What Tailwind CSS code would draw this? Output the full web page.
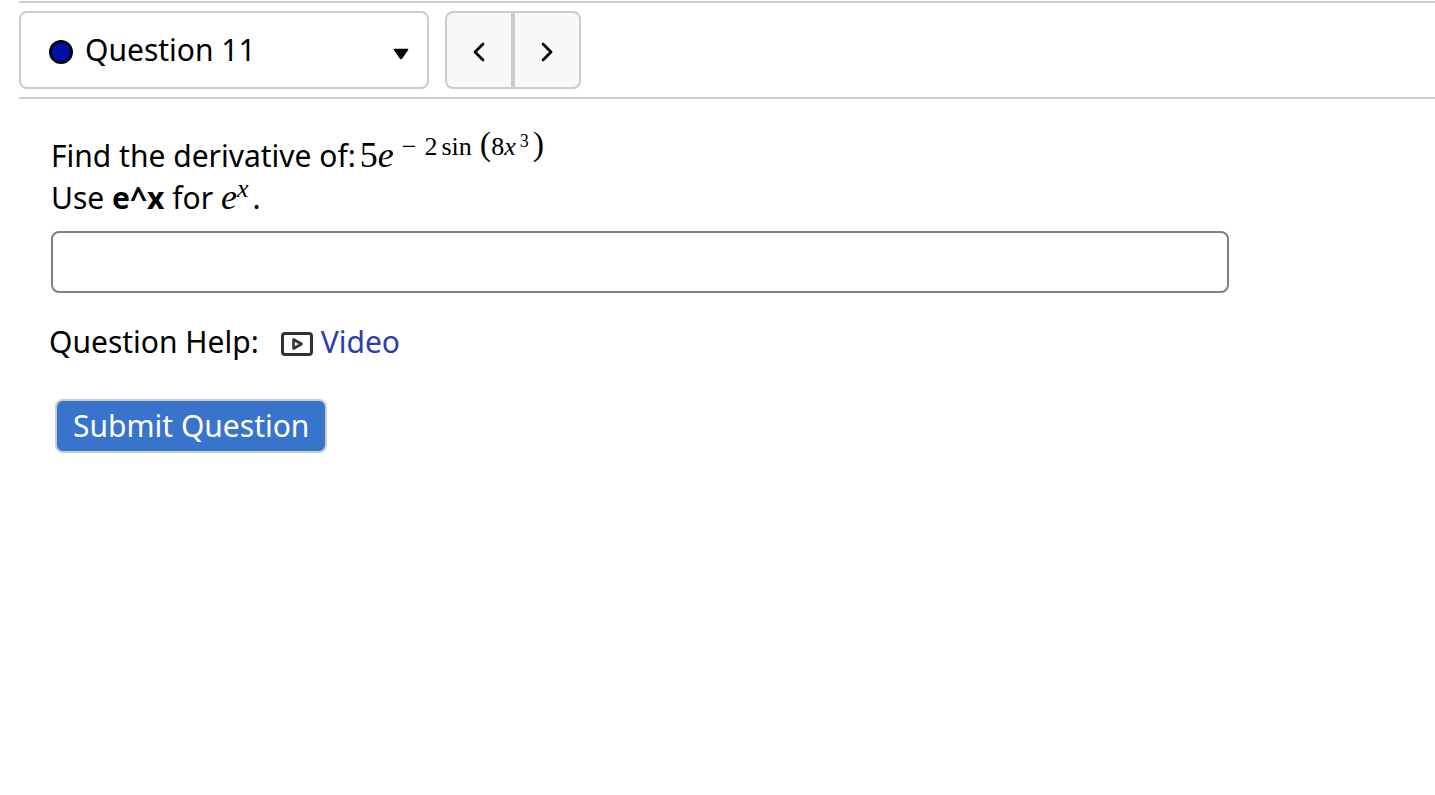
<!DOCTYPE html>
<html lang="en">
    <head>
        <meta charset="UTF-8" />
        <meta name="viewport" content="width=device-width, initial-scale=1.0" />
        <title>Question 11</title>
        <script src="https://cdn.jsdelivr.net/npm/@tailwindcss/browser@4"></script>
    </head>
    <body class="bg-white text-black font-['Noto_Sans',sans-serif] text-[30px] leading-[42px]">
        <div class="pl-[19px] pt-px">
            <!-- question navigation -->
            <nav class="flex gap-4 border-y-2 border-[#cccccc] py-2" aria-label="Questions">
                <button
                    type="button"
                    aria-haspopup="listbox"
                    class="flex h-[78px] w-[410px] items-center rounded-lg border-2 border-[#cccccc] bg-white pl-7 pr-[18px]"
                >
                    <svg class="mt-1 size-6 shrink-0" viewBox="0 0 24 24" aria-hidden="true">
                        <circle cx="12" cy="12" r="10.700" fill="#000fa6" stroke="#000" stroke-width="2.600" />
                    </svg>
                    <span class="ml-3">Question 11</span>
                    <svg class="ml-auto mt-2 h-3 w-4" viewBox="0 0 16 12" aria-hidden="true">
                        <path d="M1.500 .8h13q1.400 0 .6 1.300L9.300 10.400Q8 12 6.700 10.400L.9 2.100Q.1 .8 1.500 .8z" />
                    </svg>
                </button>
                <div class="flex">
                    <button
                        type="button"
                        aria-label="Previous question"
                        class="flex h-[78px] w-[68px] items-center justify-center rounded-l-lg border-2 border-[#cccccc] bg-[#f8f8f8]"
                    >
                        <svg class="mt-1 h-5 w-3" viewBox="0 0 12 20" fill="none" stroke="#000" stroke-width="2.800" stroke-linecap="round" stroke-linejoin="round" aria-hidden="true">
                            <path d="M10 2L2 10l8 8" />
                        </svg>
                    </button>
                    <button
                        type="button"
                        aria-label="Next question"
                        class="flex h-[78px] w-[68px] items-center justify-center rounded-r-lg border-2 border-[#cccccc] bg-[#f8f8f8]"
                    >
                        <svg class="mt-1 h-5 w-3" viewBox="0 0 12 20" fill="none" stroke="#000" stroke-width="2.800" stroke-linecap="round" stroke-linejoin="round" aria-hidden="true">
                            <path d="M2 2l8 8-8 8" />
                        </svg>
                    </button>
                </div>
            </nav>

            <main class="px-8 pt-[35px]">
                <!-- question text -->
                <div class="flex h-[42px] items-baseline">
                    <label for="answer" class="mr-1">Find the derivative of:</label>
                    <span class="flex items-baseline font-['Liberation_Serif',serif] text-[36px]">
                        <span>5</span><i>e</i>
                        <span class="ml-2 flex -translate-y-3 items-baseline text-[26px]">
                            <span class="mr-2">−</span><span class="mr-1">2</span><span class="mr-2">sin</span><span class="text-[34px]">(</span><span>8</span><i class="mr-1">x</i><span class="-translate-y-2 text-[18px]">3</span><span class="ml-1 text-[34px]">)</span>
                        </span>
                    </span>
                </div>
                <div class="flex h-[42px] items-baseline whitespace-pre">
                    <span>Use <b>e^x</b> for </span>
                    <span class="mr-1 flex items-baseline font-['Liberation_Serif',serif] text-[36px] italic">
                        <span>e</span><span class="-translate-y-3 text-[26px]">x</span>
                    </span>
                    <span>.</span>
                </div>
                <input
                    id="answer"
                    type="text"
                    autocomplete="off"
                    class="mt-[13px] block h-[62px] w-full max-w-[1178px] rounded-lg border-2 border-[#808080] bg-white px-3"
                />

                <!-- help links -->
                <div class="-ml-0.5 mt-7 flex items-center">
                    <span class="mr-[22px]">Question Help:</span>
                    <a href="#video" class="flex items-center gap-2 text-[#323ca8]">
                        <svg class="mt-1 h-6 w-8" viewBox="0 0 32 24" fill="none" stroke="#303236" aria-hidden="true">
                            <rect x="1.500" y="1.500" width="29" height="21" rx="2.500" stroke-width="3" />
                            <path d="M12.500 7.500v9l8-4.500z" stroke-width="2.600" stroke-linejoin="round" />
                        </svg>
                        Video
                    </a>
                </div>

                <button
                    type="submit"
                    class="ml-1 mt-9 flex h-[54px] items-center rounded-lg border-2 border-[#cccccc] bg-[#3874cb] px-4 text-white"
                >
                    Submit Question
                </button>
            </main>
        </div>
    </body>
</html>
